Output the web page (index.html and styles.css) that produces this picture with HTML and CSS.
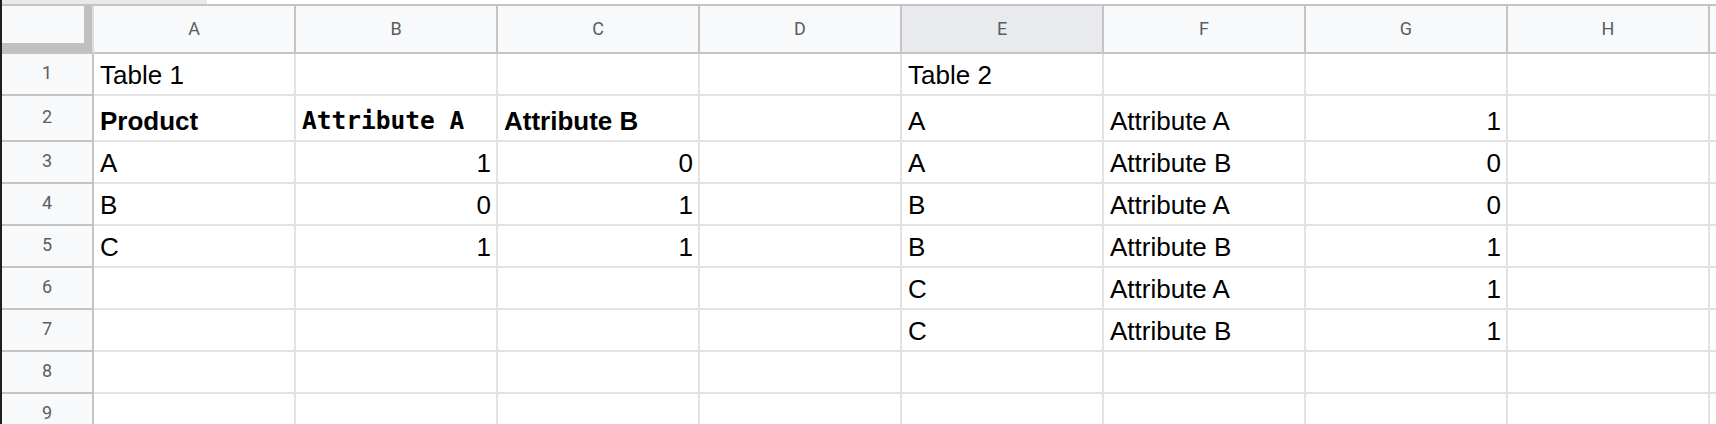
FILE: index.html
```html
<!DOCTYPE html>
<html>
<head>
<meta charset="utf-8">
<title>Sheet1</title>
<link rel="stylesheet" href="styles.css">
</head>
<body>
<div class="screen">
  <div class="edge"></div>
  <div class="main">
    <div class="topbar"><div class="topbar-tab"></div></div>
    <div class="sheet">
      <!-- header row -->
      <div class="corner"></div>
      <div class="col-head">A</div>
      <div class="col-head">B</div>
      <div class="col-head">C</div>
      <div class="col-head">D</div>
      <div class="col-head active">E</div>
      <div class="col-head">F</div>
      <div class="col-head">G</div>
      <div class="col-head">H</div>
      <div class="col-head"></div>

      <!-- 1 -->
      <div class="row-head">1</div>
      <div class="cell">Table 1</div>
      <div class="cell"></div>
      <div class="cell"></div>
      <div class="cell"></div>
      <div class="cell">Table 2</div>
      <div class="cell"></div>
      <div class="cell"></div>
      <div class="cell"></div>
      <div class="cell"></div>

      <!-- 2 -->
      <div class="row-head">2</div>
      <div class="cell b">Product</div>
      <div class="cell b mono">Attribute A</div>
      <div class="cell b">Attribute B</div>
      <div class="cell"></div>
      <div class="cell">A</div>
      <div class="cell">Attribute A</div>
      <div class="cell num">1</div>
      <div class="cell"></div>
      <div class="cell"></div>

      <!-- 3 -->
      <div class="row-head">3</div>
      <div class="cell">A</div>
      <div class="cell num">1</div>
      <div class="cell num">0</div>
      <div class="cell"></div>
      <div class="cell">A</div>
      <div class="cell">Attribute B</div>
      <div class="cell num">0</div>
      <div class="cell"></div>
      <div class="cell"></div>

      <!-- 4 -->
      <div class="row-head">4</div>
      <div class="cell">B</div>
      <div class="cell num">0</div>
      <div class="cell num">1</div>
      <div class="cell"></div>
      <div class="cell">B</div>
      <div class="cell">Attribute A</div>
      <div class="cell num">0</div>
      <div class="cell"></div>
      <div class="cell"></div>

      <!-- 5 -->
      <div class="row-head">5</div>
      <div class="cell">C</div>
      <div class="cell num">1</div>
      <div class="cell num">1</div>
      <div class="cell"></div>
      <div class="cell">B</div>
      <div class="cell">Attribute B</div>
      <div class="cell num">1</div>
      <div class="cell"></div>
      <div class="cell"></div>

      <!-- 6 -->
      <div class="row-head">6</div>
      <div class="cell"></div>
      <div class="cell"></div>
      <div class="cell"></div>
      <div class="cell"></div>
      <div class="cell">C</div>
      <div class="cell">Attribute A</div>
      <div class="cell num">1</div>
      <div class="cell"></div>
      <div class="cell"></div>

      <!-- 7 -->
      <div class="row-head">7</div>
      <div class="cell"></div>
      <div class="cell"></div>
      <div class="cell"></div>
      <div class="cell"></div>
      <div class="cell">C</div>
      <div class="cell">Attribute B</div>
      <div class="cell num">1</div>
      <div class="cell"></div>
      <div class="cell"></div>

      <!-- 8 -->
      <div class="row-head">8</div>
      <div class="cell"></div>
      <div class="cell"></div>
      <div class="cell"></div>
      <div class="cell"></div>
      <div class="cell"></div>
      <div class="cell"></div>
      <div class="cell"></div>
      <div class="cell"></div>
      <div class="cell"></div>

      <!-- 9 -->
      <div class="row-head">9</div>
      <div class="cell"></div>
      <div class="cell"></div>
      <div class="cell"></div>
      <div class="cell"></div>
      <div class="cell"></div>
      <div class="cell"></div>
      <div class="cell"></div>
      <div class="cell"></div>
      <div class="cell"></div>
    </div>
  </div>
</div>
</body>
</html>
```

FILE: styles.css
```css
*{ margin:0; padding:0; box-sizing:border-box;}
html, body{ width:1716px; height:424px; overflow:hidden; background:#fff;}
body{ font:26px/30px "Liberation Sans", Arial, Helvetica, sans-serif; color:#000;}

.screen{ display:flex; height:424px;}
.edge{ width:2px; flex:none; background:#1e1e1e;}
.main{ flex:1; display:flex; flex-direction:column; overflow:hidden;}

.topbar{ height:4px; flex:none; background:#fff;}
.topbar-tab{ width:205px; height:4px; background:#e9e9e9;}

.sheet{ display:grid; grid-template-columns:92px repeat(9, 202px); grid-template-rows:48px 42px 46px repeat(7, 42px); border-top:2px solid #c4c4c4;}

.corner{ background:#f8f9fa; border-right:2px solid #dadce0; border-bottom:2px solid #c4c4c4; box-shadow:inset -8px -9px 0 #c0c0c0;}

.col-head, .row-head{ display:flex; align-items:center; justify-content:center; background:#f8f9fa; color:#5a5e63; font:18px/20px Roboto, "Liberation Sans", Arial, sans-serif; border-right:2px solid #c4c4c4; border-bottom:2px solid #c4c4c4;}
.col-head.active{ background:#e8eaed;}
.row-head{ padding-bottom:2px;}

.cell{ display:flex; align-items:flex-end; padding:0 5px 4px 6px; border-right:2px solid #e2e2e3; border-bottom:2px solid #e2e2e3; white-space:nowrap; overflow:hidden;}
.num{ justify-content:flex-end;}
.b{ font-weight:bold;}
.mono{ font-family:"DejaVu Sans Mono", Menlo, monospace; font-size:24.5px;}
```
